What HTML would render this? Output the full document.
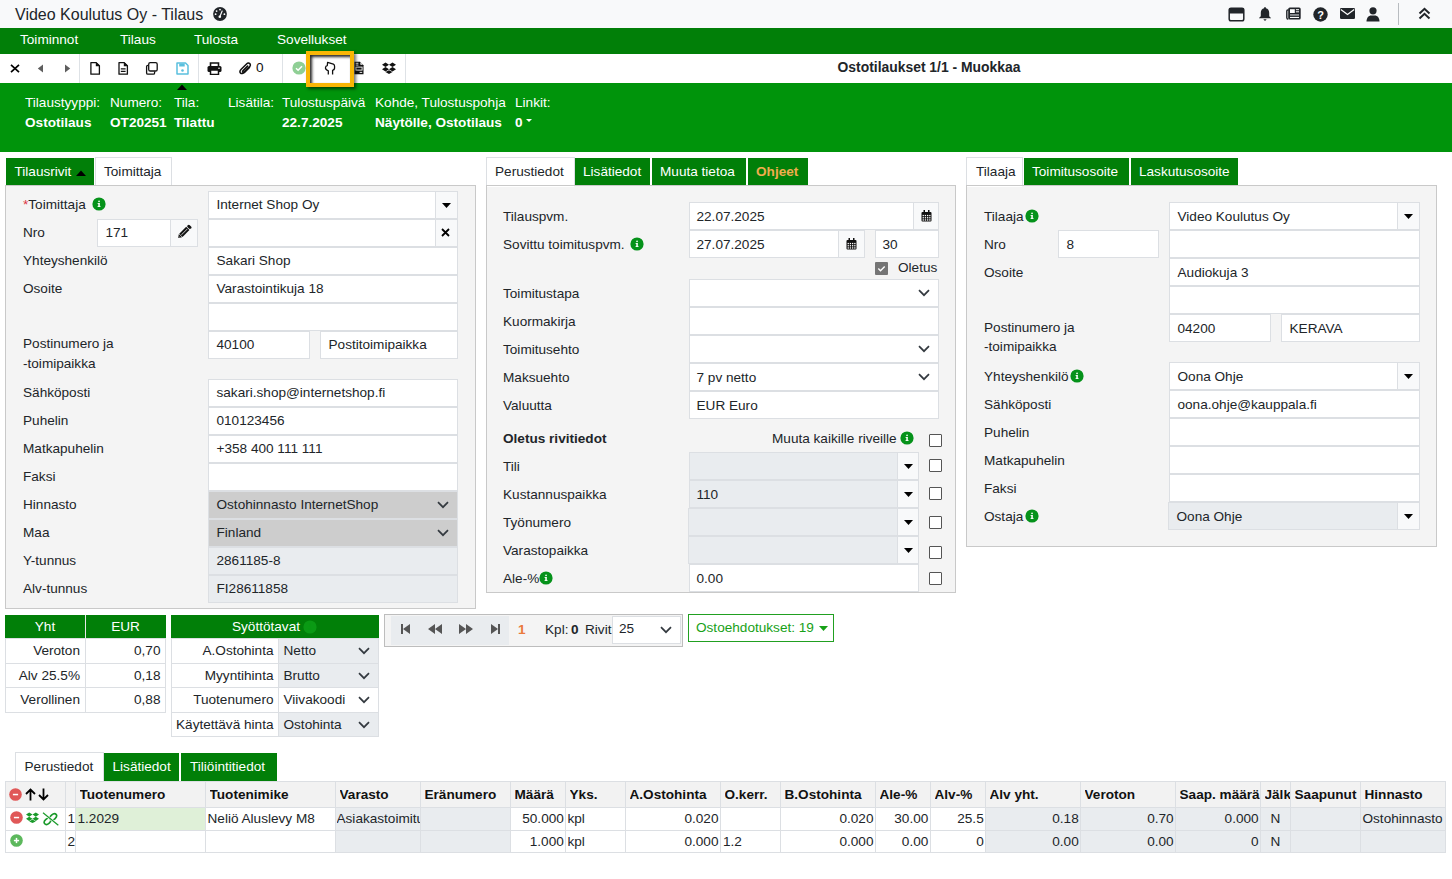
<!DOCTYPE html><html><head><meta charset="utf-8"><style>
html,body{margin:0;padding:0;width:1452px;height:879px;overflow:hidden;background:#fff;position:relative;font-family:"Liberation Sans",sans-serif;}
.t{position:absolute;white-space:nowrap;}
.b{position:absolute;box-sizing:border-box;}
</style></head><body>
<div class="b" style="left:0px;top:0px;width:1452px;height:28px;background:#f8f9fa"></div>
<div class="t" style="left:15px;top:4.86px;font-size:16px;line-height:19.2px;font-weight:400;color:#212529;">Video Koulutus Oy - Tilaus</div>
<div class="b" style="left:0px;top:28px;width:1452px;height:26px;background:#017f08"></div>
<div class="t" style="left:20px;top:32.13px;font-size:13.6px;line-height:16.32px;font-weight:400;color:#fff;">Toiminnot</div>
<div class="t" style="left:120px;top:32.13px;font-size:13.6px;line-height:16.32px;font-weight:400;color:#fff;">Tilaus</div>
<div class="t" style="left:194px;top:32.13px;font-size:13.6px;line-height:16.32px;font-weight:400;color:#fff;">Tulosta</div>
<div class="t" style="left:277px;top:32.13px;font-size:13.6px;line-height:16.32px;font-weight:400;color:#fff;">Sovellukset</div>
<div class="b" style="left:0px;top:54px;width:1452px;height:29px;background:#fff"></div>
<div class="b" style="left:79px;top:54px;width:1px;height:29px;background:#dee2e6"></div>
<div class="b" style="left:198px;top:54px;width:1px;height:29px;background:#dee2e6"></div>
<div class="b" style="left:282px;top:54px;width:1px;height:29px;background:#dee2e6"></div>
<div class="b" style="left:405px;top:54px;width:1px;height:29px;background:#dee2e6"></div>
<div class="t" style="left:629px;width:600px;text-align:center;top:58.54px;font-size:13.9px;line-height:16.68px;font-weight:700;color:#212529;">Ostotilaukset 1/1 - Muokkaa</div>
<div class="b" style="left:0px;top:83px;width:1452px;height:69px;background:#00940b"></div>
<div class="t" style="left:25px;top:95.13px;font-size:13.6px;line-height:16.32px;font-weight:400;color:#fff;">Tilaustyyppi:</div>
<div class="t" style="left:25px;top:115.13px;font-size:13.6px;line-height:16.32px;font-weight:700;color:#fff;">Ostotilaus</div>
<div class="t" style="left:110px;top:95.13px;font-size:13.6px;line-height:16.32px;font-weight:400;color:#fff;">Numero:</div>
<div class="t" style="left:110px;top:115.13px;font-size:13.6px;line-height:16.32px;font-weight:700;color:#fff;">OT20251</div>
<div class="t" style="left:174px;top:95.13px;font-size:13.6px;line-height:16.32px;font-weight:400;color:#fff;">Tila:</div>
<div class="t" style="left:174px;top:115.13px;font-size:13.6px;line-height:16.32px;font-weight:700;color:#fff;">Tilattu</div>
<div class="t" style="left:228px;top:95.13px;font-size:13.6px;line-height:16.32px;font-weight:400;color:#fff;">Lisätila:</div>
<div class="t" style="left:282px;top:95.13px;font-size:13.6px;line-height:16.32px;font-weight:400;color:#fff;">Tulostuspäivä</div>
<div class="t" style="left:282px;top:115.13px;font-size:13.6px;line-height:16.32px;font-weight:700;color:#fff;">22.7.2025</div>
<div class="t" style="left:375px;top:95.13px;font-size:13.6px;line-height:16.32px;font-weight:400;color:#fff;">Kohde, Tulostuspohja</div>
<div class="t" style="left:375px;top:115.13px;font-size:13.6px;line-height:16.32px;font-weight:700;color:#fff;">Näytölle, Ostotilaus</div>
<div class="t" style="left:515px;top:95.13px;font-size:13.6px;line-height:16.32px;font-weight:400;color:#fff;">Linkit:</div>
<div class="t" style="left:515px;top:115.13px;font-size:13.6px;line-height:16.32px;font-weight:700;color:#fff;">0</div>
<svg class="b" style="left:526px;top:119px" width="6" height="4" viewBox="0 0 6 4"><path d="M0 0H6L3 3Z" fill="#fff"/></svg>
<svg class="b" style="left:213px;top:6.5px" width="14" height="14" viewBox="0 0 14 14"><circle cx="7" cy="7" r="6.9" fill="#212529"/><circle cx="6.8" cy="9.8" r="1.3" fill="#fff"/><path d="M6.8 9.8L9.3 3.6" stroke="#fff" stroke-width="1.2"/><circle cx="3.6" cy="4.1" r="0.9" fill="#fff"/><circle cx="7" cy="2.6" r="0.9" fill="#fff"/><circle cx="2.6" cy="7.2" r="0.9" fill="#fff"/><circle cx="11.4" cy="7.2" r="0.9" fill="#fff"/></svg>
<svg class="b" style="left:1228px;top:6.5px" width="17" height="15" viewBox="0 0 17 15"><rect x="1.2" y="1.2" width="14.6" height="12.6" rx="1.8" fill="none" stroke="#212529" stroke-width="1.5"/><rect x="1" y="1" width="15" height="5.6" rx="1.2" fill="#212529"/></svg>
<svg class="b" style="left:1258px;top:7px" width="14" height="15" viewBox="0 0 14 15"><path d="M7 0C7.5 0 7.9 0.4 7.9 0.9V1.3C10 1.8 11.2 3.6 11.2 5.8V8.6C11.2 9.6 11.8 10.3 13 10.9V11.3H1V10.9C2.2 10.3 2.8 9.6 2.8 8.6V5.8C2.8 3.6 4 1.8 6.1 1.3V0.9C6.1 0.4 6.5 0 7 0Z" fill="#212529"/><path d="M5.3 12.2H8.7L7 14Z" fill="#212529"/></svg>
<svg class="b" style="left:1286px;top:7px" width="15" height="13" viewBox="0 0 15 13"><path d="M2.6 3H1.8C1.2 3 0.8 3.4 0.8 4V10.8C0.8 11.6 1.4 12.2 2.2 12.2" fill="none" stroke="#212529" stroke-width="1.4"/><rect x="2.2" y="0.5" width="12.5" height="12" rx="1.6" fill="#212529"/><rect x="4" y="2.2" width="4.8" height="3.8" fill="#fff"/><rect x="9.9" y="2.2" width="3.1" height="1" fill="#fff"/><rect x="9.9" y="4.3" width="3.1" height="1" fill="#fff"/><rect x="4" y="7" width="9" height="1.9" fill="#8a8d90"/><rect x="4" y="9.9" width="9" height="1.1" fill="#fff"/></svg>
<svg class="b" style="left:1313px;top:7px" width="15" height="15" viewBox="0 0 15 15"><circle cx="7.5" cy="7.5" r="7.2" fill="#212529"/><text x="7.5" y="11.6" text-anchor="middle" font-family="Liberation Sans" font-weight="700" font-size="11" fill="#fff">?</text></svg>
<svg class="b" style="left:1340px;top:8px" width="15" height="11" viewBox="0 0 15 11"><rect x="0" y="0" width="15" height="11" rx="1.2" fill="#212529"/><path d="M0.8 1.5L7.5 6.5L14.2 1.5" fill="none" stroke="#fff" stroke-width="1.2"/></svg>
<svg class="b" style="left:1366px;top:7px" width="14" height="15" viewBox="0 0 14 15"><circle cx="7" cy="3.8" r="3.6" fill="#212529"/><path d="M0.5 14.5C0.5 10.5 3 8.5 5 8.5H9C11 8.5 13.5 10.5 13.5 14.5Z" fill="#212529"/></svg>
<div class="b" style="left:1398px;top:3px;width:1px;height:22px;background:#b8bcc0"></div>
<svg class="b" style="left:1418px;top:7px" width="13" height="13" viewBox="0 0 13 13"><path d="M1.5 6.5L6.5 1.8L11.5 6.5M1.5 11.5L6.5 6.8L11.5 11.5" fill="none" stroke="#212529" stroke-width="2"/></svg>
<svg class="b" style="left:10px;top:63.5px" width="10" height="9" viewBox="0 0 10 9"><path d="M1 0.8L9 8.2M9 0.8L1 8.2" stroke="#000" stroke-width="1.7"/></svg>
<svg class="b" style="left:37px;top:63.5px" width="7" height="9" viewBox="0 0 7 9"><path d="M6 0.5V8.5L0.8 4.5Z" fill="#5e5e5e"/></svg>
<svg class="b" style="left:64px;top:63.5px" width="7" height="9" viewBox="0 0 7 9"><path d="M1 0.5V8.5L6.2 4.5Z" fill="#5e5e5e"/></svg>
<svg class="b" style="left:89px;top:61px" width="12" height="15" viewBox="0 0 12 15"><path d="M1.9 1.6H7.2L10.4 4.8V13.2H1.9Z" fill="none" stroke="#111" stroke-width="1.3" stroke-linejoin="round"/><path d="M6.8 1.5H7.6L10.5 4.4V5.2H6.8Z" fill="#111"/></svg>
<svg class="b" style="left:117px;top:61px" width="12" height="15" viewBox="0 0 12 15"><path d="M2 1.6H7.2L10.4 4.8V13.2H2Z" fill="none" stroke="#111" stroke-width="1.3" stroke-linejoin="round"/><path d="M6.8 1.5H7.6L10.5 4.4V5.2H6.8Z" fill="#111"/><path d="M3.8 7.9H8.6M3.8 10.4H8.6" stroke="#111" stroke-width="1.2"/></svg>
<svg class="b" style="left:145px;top:61px" width="14" height="15" viewBox="0 0 14 15"><path d="M5.3 1.6H10.6C11.6 1.6 12.2 2.2 12.2 3.2V8.4C12.2 9.4 11.6 10 10.6 10H5.3C4.3 10 3.7 9.4 3.7 8.4V3.2C3.7 2.2 4.3 1.6 5.3 1.6Z" fill="none" stroke="#111" stroke-width="1.3"/><path d="M3 4.3H2.9C2.1 4.3 1.6 4.8 1.6 5.6V11.9C1.6 12.7 2.1 13.2 2.9 13.2H8.3C9.1 13.2 9.6 12.7 9.6 11.9V10.6" fill="none" stroke="#111" stroke-width="1.3"/></svg>
<svg class="b" style="left:176px;top:62px" width="13" height="13" viewBox="0 0 13 13"><path d="M1 1H9.5L12 3.5V12H1Z" fill="none" stroke="#5bc0de" stroke-width="1.5" stroke-linejoin="round"/><rect x="3.2" y="1.5" width="5.5" height="3" fill="#5bc0de"/><circle cx="6.5" cy="8.5" r="1.3" fill="#5bc0de"/></svg>
<svg class="b" style="left:207px;top:62px" width="15" height="13" viewBox="0 0 15 13"><path d="M3.5 4V1H11.5V4" fill="none" stroke="#111" stroke-width="1.6"/><rect x="0.5" y="4" width="14" height="6" rx="1.5" fill="#111"/><rect x="3.5" y="8" width="8" height="4.5" fill="#fff" stroke="#111" stroke-width="1.5"/><circle cx="12" cy="6.2" r="0.8" fill="#fff"/></svg>
<svg class="b" style="left:239px;top:62px" width="13" height="13" viewBox="0 0 13 13"><path d="M10.5 5.5L5.5 10.5C4.2 11.8 2.3 11.8 1.6 11.1C0.9 10.4 0.9 8.6 2.2 7.3L7.8 1.7C8.7 0.8 10 0.8 10.8 1.6C11.6 2.4 11.6 3.7 10.7 4.6L5.4 9.9C4.9 10.4 4.2 10.4 3.9 10.1C3.6 9.8 3.6 9.1 4.1 8.6L8.6 4.1" fill="none" stroke="#111" stroke-width="1.5" stroke-linecap="round"/></svg>
<div class="t" style="left:256px;top:60.13px;font-size:13.6px;line-height:16.32px;font-weight:400;color:#111;">0</div>
<svg class="b" style="left:292px;top:61px" width="14" height="14" viewBox="0 0 14 14"><circle cx="7" cy="7" r="6.6" fill="#8fcf95"/><path d="M4 7.2L6.1 9.2L10 5.2" fill="none" stroke="#fff" stroke-width="1.5"/></svg>
<svg class="b" style="left:382px;top:62px" width="14" height="12" viewBox="0 0 14 12"><path d="M3.5 0.5L7 2.8L3.5 5L0 2.8Z M10.5 0.5L14 2.8L10.5 5L7 2.8Z M3.5 5L7 7.3L3.5 9.5L0 7.3Z M10.5 5L14 7.3L10.5 9.5L7 7.3Z M3.5 10L7 8.2L10.5 10L7 12Z" fill="#111"/></svg>
<svg class="b" style="left:354px;top:61px" width="10" height="14" viewBox="0 0 10 14"><path d="M0.5 0.7H6L9.5 4.2V13.3H0.5Z" fill="#111"/><path d="M6.4 1.3V3.8H8.9Z" fill="#fff"/><rect x="1.6" y="1.8" width="2.8" height="0.9" fill="#fff"/><rect x="1.6" y="3.6" width="2.8" height="0.9" fill="#fff"/><rect x="1.9" y="6.1" width="6.2" height="3" fill="#111" stroke="#fff" stroke-width="0.9"/><rect x="5.6" y="10.9" width="2.6" height="0.9" fill="#fff"/></svg>
<div class="b" style="left:306px;top:51px;width:48px;height:36px;border:4px solid #f9b605;box-shadow:inset 2px 2px 3px rgba(0,0,0,0.85), 2px 2px 3px rgba(0,0,0,0.55);background:#fff"></div>
<svg class="b" style="left:324px;top:61px" width="12" height="15" viewBox="0 0 12 15"><path d="M4.3 13.6V9.8C2.3 9 1.1 7.6 1.6 6.1C1.9 5.1 2.6 4.6 3.3 4.5L3.6 1.4L9.4 3.1C10.2 3.4 10.7 4.5 10.6 5.8L10.5 7.5C10.3 8.5 9.6 9 8.6 9.3V13.6" fill="none" stroke="#111" stroke-width="1.3" stroke-linejoin="round"/></svg>
<svg class="b" style="left:177px;top:84px" width="10" height="6" viewBox="0 0 10 6"><path d="M0 6L5 0.5L10 6Z" fill="#000"/></svg>
<div class="b" style="left:5px;top:185px;width:471px;height:424px;background:#f4f4f4;border:1px solid #c9c9c9"></div>
<div class="b" style="left:6px;top:158px;width:88px;height:27px;background:#017f08"></div>
<div class="t" style="left:14.5px;top:164.13px;font-size:13.6px;line-height:16.32px;font-weight:400;color:#fff;">Tilausrivit</div>
<svg class="b" style="left:76px;top:170px" width="10" height="6" viewBox="0 0 10 6"><path d="M0 6L5 0.5L10 6Z" fill="#000"/></svg>
<div class="b" style="left:95px;top:157px;width:77px;height:29px;background:#fff;border:1px solid #dcdfe3;border-bottom:none"></div>
<div class="t" style="left:104px;top:164.13px;font-size:13.6px;line-height:16.32px;font-weight:400;color:#212529;">Toimittaja</div>
<div class="b" style="left:5px;top:185px;width:471px;height:1px;background:#c9c9c9"></div>
<div class="t" style="left:23px;top:196.63px;font-size:13.6px;line-height:16.32px;font-weight:400;color:#212529;"><span style="color:#dc3545">*</span>Toimittaja</div>
<svg class="b" style="left:91.5px;top:197px" width="14" height="14" viewBox="0 0 14 14"><circle cx="7" cy="7" r="6.6" fill="#05921a"/><rect x="6.3" y="6.1" width="1.5" height="3.6" fill="#fff"/><rect x="5.6" y="8.9" width="2.9" height="1" fill="#fff"/><rect x="5.6" y="6.1" width="2" height="0.9" fill="#fff"/><circle cx="7.05" cy="4.3" r="0.85" fill="#fff"/></svg>
<div class="b" style="left:208px;top:191px;width:250px;height:28px;background:#fff;border:1px solid #dcdfe3"></div>
<div class="t" style="left:216.5px;top:196.63px;font-size:13.6px;line-height:16.32px;font-weight:400;color:#212529;">Internet Shop Oy</div>
<div class="b" style="left:435px;top:191px;width:23px;height:28px;background:#f8f9fa;border:1px solid #dcdfe3"></div>
<svg class="b" style="left:442.0px;top:202.5px" width="9" height="5" viewBox="0 0 9 5"><path d="M0 0H9L4.5 5Z" fill="#000"/></svg>
<div class="t" style="left:23px;top:224.63px;font-size:13.6px;line-height:16.32px;font-weight:400;color:#212529;">Nro</div>
<div class="b" style="left:97px;top:219px;width:74px;height:28px;background:#fff;border:1px solid #dcdfe3"></div>
<div class="t" style="left:105.5px;top:224.63px;font-size:13.6px;line-height:16.32px;font-weight:400;color:#212529;">171</div>
<div class="b" style="left:170px;top:219px;width:28px;height:28px;background:#f8f9fa;border:1px solid #dcdfe3"></div>
<svg class="b" style="left:177px;top:224px" width="15" height="15" viewBox="0 0 15 15"><g transform="translate(1.2,14) rotate(-45)"><path d="M0 0L3.2 -2.3V2.3Z" fill="#111"/><rect x="3.8" y="-2.3" width="9.8" height="4.6" fill="#111"/><rect x="4.6" y="-0.35" width="8.2" height="0.7" fill="#fff" opacity="0.8"/><rect x="14.3" y="-2.3" width="3" height="4.6" rx="1.4" fill="#111"/><path d="M0.9 0L1.9 -0.7V0.7Z" fill="#fff" opacity="0.6"/></g></svg>
<div class="b" style="left:208px;top:219px;width:250px;height:28px;background:#fff;border:1px solid #dcdfe3"></div>
<div class="b" style="left:435px;top:219px;width:23px;height:28px;background:#f8f9fa;border:1px solid #dcdfe3"></div>
<svg class="b" style="left:441px;top:228px" width="9" height="9" viewBox="0 0 9 9"><path d="M1 1L8 8M8 1L1 8" stroke="#000" stroke-width="1.8"/></svg>
<div class="t" style="left:23px;top:252.63px;font-size:13.6px;line-height:16.32px;font-weight:400;color:#212529;">Yhteyshenkilö</div>
<div class="b" style="left:208px;top:247px;width:250px;height:28px;background:#fff;border:1px solid #dcdfe3"></div>
<div class="t" style="left:216.5px;top:252.63px;font-size:13.6px;line-height:16.32px;font-weight:400;color:#212529;">Sakari Shop</div>
<div class="t" style="left:23px;top:280.63px;font-size:13.6px;line-height:16.32px;font-weight:400;color:#212529;">Osoite</div>
<div class="b" style="left:208px;top:275px;width:250px;height:28px;background:#fff;border:1px solid #dcdfe3"></div>
<div class="t" style="left:216.5px;top:280.63px;font-size:13.6px;line-height:16.32px;font-weight:400;color:#212529;">Varastointikuja 18</div>
<div class="b" style="left:208px;top:303px;width:250px;height:28px;background:#fff;border:1px solid #dcdfe3"></div>
<div class="t" style="left:23px;top:336.43px;font-size:13.6px;line-height:16.32px;font-weight:400;color:#212529;">Postinumero ja</div>
<div class="t" style="left:23px;top:356.43px;font-size:13.6px;line-height:16.32px;font-weight:400;color:#212529;">-toimipaikka</div>
<div class="b" style="left:208px;top:331px;width:102px;height:28px;background:#fff;border:1px solid #dcdfe3"></div>
<div class="t" style="left:216.5px;top:336.63px;font-size:13.6px;line-height:16.32px;font-weight:400;color:#212529;">40100</div>
<div class="b" style="left:320px;top:331px;width:138px;height:28px;background:#fff;border:1px solid #dcdfe3"></div>
<div class="t" style="left:328.5px;top:336.63px;font-size:13.6px;line-height:16.32px;font-weight:400;color:#212529;">Postitoimipaikka</div>
<div class="t" style="left:23px;top:384.63px;font-size:13.6px;line-height:16.32px;font-weight:400;color:#212529;">Sähköposti</div>
<div class="b" style="left:208px;top:379px;width:250px;height:28px;background:#fff;border:1px solid #dcdfe3"></div>
<div class="t" style="left:216.5px;top:384.63px;font-size:13.6px;line-height:16.32px;font-weight:400;color:#212529;">sakari.shop@internetshop.fi</div>
<div class="t" style="left:23px;top:412.63px;font-size:13.6px;line-height:16.32px;font-weight:400;color:#212529;">Puhelin</div>
<div class="b" style="left:208px;top:407px;width:250px;height:28px;background:#fff;border:1px solid #dcdfe3"></div>
<div class="t" style="left:216.5px;top:412.63px;font-size:13.6px;line-height:16.32px;font-weight:400;color:#212529;">010123456</div>
<div class="t" style="left:23px;top:440.63px;font-size:13.6px;line-height:16.32px;font-weight:400;color:#212529;">Matkapuhelin</div>
<div class="b" style="left:208px;top:435px;width:250px;height:28px;background:#fff;border:1px solid #dcdfe3"></div>
<div class="t" style="left:216.5px;top:440.63px;font-size:13.6px;line-height:16.32px;font-weight:400;color:#212529;">+358 400 111 111</div>
<div class="t" style="left:23px;top:468.63px;font-size:13.6px;line-height:16.32px;font-weight:400;color:#212529;">Faksi</div>
<div class="b" style="left:208px;top:463px;width:250px;height:28px;background:#fff;border:1px solid #dcdfe3"></div>
<div class="t" style="left:23px;top:496.63px;font-size:13.6px;line-height:16.32px;font-weight:400;color:#212529;">Hinnasto</div>
<div class="b" style="left:208px;top:491px;width:250px;height:28px;background:#cdcdcd;border:1px solid #dcdfe3"></div>
<div class="t" style="left:216.5px;top:496.63px;font-size:13.6px;line-height:16.32px;font-weight:400;color:#212529;">Ostohinnasto InternetShop</div>
<svg class="b" style="left:437px;top:501px" width="12" height="8" viewBox="0 0 12 8"><path d="M1 1.2L6 6.2L11 1.2" fill="none" stroke="#343a40" stroke-width="1.7"/></svg>
<div class="t" style="left:23px;top:524.63px;font-size:13.6px;line-height:16.32px;font-weight:400;color:#212529;">Maa</div>
<div class="b" style="left:208px;top:519px;width:250px;height:28px;background:#cdcdcd;border:1px solid #dcdfe3"></div>
<div class="t" style="left:216.5px;top:524.63px;font-size:13.6px;line-height:16.32px;font-weight:400;color:#212529;">Finland</div>
<svg class="b" style="left:437px;top:529px" width="12" height="8" viewBox="0 0 12 8"><path d="M1 1.2L6 6.2L11 1.2" fill="none" stroke="#343a40" stroke-width="1.7"/></svg>
<div class="t" style="left:23px;top:552.63px;font-size:13.6px;line-height:16.32px;font-weight:400;color:#212529;">Y-tunnus</div>
<div class="b" style="left:208px;top:547px;width:250px;height:28px;background:#e9ecef;border:1px solid #dcdfe3"></div>
<div class="t" style="left:216.5px;top:552.63px;font-size:13.6px;line-height:16.32px;font-weight:400;color:#212529;">2861185-8</div>
<div class="t" style="left:23px;top:580.63px;font-size:13.6px;line-height:16.32px;font-weight:400;color:#212529;">Alv-tunnus</div>
<div class="b" style="left:208px;top:575px;width:250px;height:28px;background:#e9ecef;border:1px solid #dcdfe3"></div>
<div class="t" style="left:216.5px;top:580.63px;font-size:13.6px;line-height:16.32px;font-weight:400;color:#212529;">FI28611858</div>
<div class="b" style="left:486px;top:185px;width:470px;height:408px;background:#f4f4f4;border:1px solid #c9c9c9"></div>
<div class="b" style="left:486px;top:157px;width:89px;height:29px;background:#fff;border:1px solid #dcdfe3;border-bottom:none"></div>
<div class="t" style="left:495px;top:164.13px;font-size:13.6px;line-height:16.32px;font-weight:400;color:#212529;">Perustiedot</div>
<div class="b" style="left:486px;top:185px;width:470px;height:1px;background:#c9c9c9"></div>
<div class="b" style="left:487px;top:186px;width:87px;height:1px;background:#fff"></div>
<div class="b" style="left:575px;top:158px;width:75px;height:27px;background:#017f08"></div>
<div class="t" style="left:583px;top:164.13px;font-size:13.6px;line-height:16.32px;font-weight:400;color:#fff;">Lisätiedot</div>
<div class="b" style="left:652px;top:158px;width:94px;height:27px;background:#017f08"></div>
<div class="t" style="left:660px;top:164.13px;font-size:13.6px;line-height:16.32px;font-weight:400;color:#fff;">Muuta tietoa</div>
<div class="b" style="left:748px;top:158px;width:60px;height:27px;background:#017f08"></div>
<div class="t" style="left:756px;top:164.13px;font-size:13.6px;line-height:16.32px;font-weight:700;color:#f0ad4e;">Ohjeet</div>
<div class="t" style="left:503px;top:208.63px;font-size:13.6px;line-height:16.32px;font-weight:400;color:#212529;">Tilauspvm.</div>
<div class="b" style="left:689px;top:202px;width:250px;height:28px;background:#fff;border:1px solid #dcdfe3"></div>
<div class="t" style="left:696.5px;top:208.63px;font-size:13.6px;line-height:16.32px;font-weight:400;color:#212529;">22.07.2025</div>
<div class="b" style="left:913px;top:202px;width:26px;height:28px;background:#f8f9fa;border:1px solid #dcdfe3"></div>
<svg class="b" style="left:920.5px;top:210px" width="11" height="12" viewBox="0 0 11 12"><rect x="0.5" y="2" width="10" height="9.5" rx="1" fill="#111"/><rect x="2.5" y="0" width="1.5" height="3" fill="#111"/><rect x="7" y="0" width="1.5" height="3" fill="#111"/><rect x="1.6" y="4.9" width="1.3" height="1.3" fill="#fff"/><rect x="1.6" y="7.1000000000000005" width="1.3" height="1.3" fill="#fff"/><rect x="1.6" y="9.3" width="1.3" height="1.3" fill="#fff"/><rect x="3.8000000000000003" y="4.9" width="1.3" height="1.3" fill="#fff"/><rect x="3.8000000000000003" y="7.1000000000000005" width="1.3" height="1.3" fill="#fff"/><rect x="3.8000000000000003" y="9.3" width="1.3" height="1.3" fill="#fff"/><rect x="6.0" y="4.9" width="1.3" height="1.3" fill="#fff"/><rect x="6.0" y="7.1000000000000005" width="1.3" height="1.3" fill="#fff"/><rect x="6.0" y="9.3" width="1.3" height="1.3" fill="#fff"/><rect x="8.200000000000001" y="4.9" width="1.3" height="1.3" fill="#fff"/><rect x="8.200000000000001" y="7.1000000000000005" width="1.3" height="1.3" fill="#fff"/><rect x="8.200000000000001" y="9.3" width="1.3" height="1.3" fill="#fff"/></svg>
<div class="t" style="left:503px;top:236.63px;font-size:13.6px;line-height:16.32px;font-weight:400;color:#212529;">Sovittu toimituspvm.</div>
<svg class="b" style="left:630px;top:237px" width="14" height="14" viewBox="0 0 14 14"><circle cx="7" cy="7" r="6.6" fill="#05921a"/><rect x="6.3" y="6.1" width="1.5" height="3.6" fill="#fff"/><rect x="5.6" y="8.9" width="2.9" height="1" fill="#fff"/><rect x="5.6" y="6.1" width="2" height="0.9" fill="#fff"/><circle cx="7.05" cy="4.3" r="0.85" fill="#fff"/></svg>
<div class="b" style="left:689px;top:230px;width:176px;height:28px;background:#fff;border:1px solid #dcdfe3"></div>
<div class="t" style="left:696.5px;top:236.63px;font-size:13.6px;line-height:16.32px;font-weight:400;color:#212529;">27.07.2025</div>
<div class="b" style="left:838px;top:230px;width:27px;height:28px;background:#f8f9fa;border:1px solid #dcdfe3"></div>
<svg class="b" style="left:846px;top:238px" width="11" height="12" viewBox="0 0 11 12"><rect x="0.5" y="2" width="10" height="9.5" rx="1" fill="#111"/><rect x="2.5" y="0" width="1.5" height="3" fill="#111"/><rect x="7" y="0" width="1.5" height="3" fill="#111"/><rect x="1.6" y="4.9" width="1.3" height="1.3" fill="#fff"/><rect x="1.6" y="7.1000000000000005" width="1.3" height="1.3" fill="#fff"/><rect x="1.6" y="9.3" width="1.3" height="1.3" fill="#fff"/><rect x="3.8000000000000003" y="4.9" width="1.3" height="1.3" fill="#fff"/><rect x="3.8000000000000003" y="7.1000000000000005" width="1.3" height="1.3" fill="#fff"/><rect x="3.8000000000000003" y="9.3" width="1.3" height="1.3" fill="#fff"/><rect x="6.0" y="4.9" width="1.3" height="1.3" fill="#fff"/><rect x="6.0" y="7.1000000000000005" width="1.3" height="1.3" fill="#fff"/><rect x="6.0" y="9.3" width="1.3" height="1.3" fill="#fff"/><rect x="8.200000000000001" y="4.9" width="1.3" height="1.3" fill="#fff"/><rect x="8.200000000000001" y="7.1000000000000005" width="1.3" height="1.3" fill="#fff"/><rect x="8.200000000000001" y="9.3" width="1.3" height="1.3" fill="#fff"/></svg>
<div class="b" style="left:875px;top:230px;width:64px;height:28px;background:#fff;border:1px solid #dcdfe3"></div>
<div class="t" style="left:882.5px;top:236.63px;font-size:13.6px;line-height:16.32px;font-weight:400;color:#212529;">30</div>
<svg class="b" style="left:875px;top:262px" width="13" height="13" viewBox="0 0 13 13"><rect x="0" y="0" width="13" height="13" rx="1" fill="#757575"/><path d="M3.3 6.6L5.5 8.7L9.7 4.5" fill="none" stroke="#fff" stroke-width="1.4"/></svg>
<div class="t" style="left:898px;top:260.13px;font-size:13.6px;line-height:16.32px;font-weight:400;color:#212529;">Oletus</div>
<div class="t" style="left:503px;top:285.63px;font-size:13.6px;line-height:16.32px;font-weight:400;color:#212529;">Toimitustapa</div>
<div class="b" style="left:689px;top:279px;width:250px;height:28px;background:#fff;border:1px solid #dcdfe3"></div>
<svg class="b" style="left:918px;top:289px" width="12" height="8" viewBox="0 0 12 8"><path d="M1 1.2L6 6.2L11 1.2" fill="none" stroke="#343a40" stroke-width="1.7"/></svg>
<div class="t" style="left:503px;top:313.63px;font-size:13.6px;line-height:16.32px;font-weight:400;color:#212529;">Kuormakirja</div>
<div class="b" style="left:689px;top:307px;width:250px;height:28px;background:#fff;border:1px solid #dcdfe3"></div>
<div class="t" style="left:503px;top:341.63px;font-size:13.6px;line-height:16.32px;font-weight:400;color:#212529;">Toimitusehto</div>
<div class="b" style="left:689px;top:335px;width:250px;height:28px;background:#fff;border:1px solid #dcdfe3"></div>
<svg class="b" style="left:918px;top:345px" width="12" height="8" viewBox="0 0 12 8"><path d="M1 1.2L6 6.2L11 1.2" fill="none" stroke="#343a40" stroke-width="1.7"/></svg>
<div class="t" style="left:503px;top:369.63px;font-size:13.6px;line-height:16.32px;font-weight:400;color:#212529;">Maksuehto</div>
<div class="b" style="left:689px;top:363px;width:250px;height:28px;background:#fff;border:1px solid #dcdfe3"></div>
<div class="t" style="left:696.5px;top:369.63px;font-size:13.6px;line-height:16.32px;font-weight:400;color:#212529;">7 pv netto</div>
<svg class="b" style="left:918px;top:373px" width="12" height="8" viewBox="0 0 12 8"><path d="M1 1.2L6 6.2L11 1.2" fill="none" stroke="#343a40" stroke-width="1.7"/></svg>
<div class="t" style="left:503px;top:397.63px;font-size:13.6px;line-height:16.32px;font-weight:400;color:#212529;">Valuutta</div>
<div class="b" style="left:689px;top:391px;width:250px;height:28px;background:#fff;border:1px solid #dcdfe3"></div>
<div class="t" style="left:696.5px;top:397.63px;font-size:13.6px;line-height:16.32px;font-weight:400;color:#212529;">EUR Euro</div>
<div class="t" style="left:503px;top:431.13px;font-size:13.6px;line-height:16.32px;font-weight:700;color:#212529;">Oletus rivitiedot</div>
<div class="t" style="left:772px;top:431.13px;font-size:13.6px;line-height:16.32px;font-weight:400;color:#212529;">Muuta kaikille riveille</div>
<svg class="b" style="left:899.5px;top:431px" width="14" height="14" viewBox="0 0 14 14"><circle cx="7" cy="7" r="6.6" fill="#05921a"/><rect x="6.3" y="6.1" width="1.5" height="3.6" fill="#fff"/><rect x="5.6" y="8.9" width="2.9" height="1" fill="#fff"/><rect x="5.6" y="6.1" width="2" height="0.9" fill="#fff"/><circle cx="7.05" cy="4.3" r="0.85" fill="#fff"/></svg>
<div class="b" style="left:929px;top:434px;width:13px;height:13px;background:#fff;border:1px solid #555;border-radius:1px"></div>
<div class="t" style="left:503px;top:458.63px;font-size:13.6px;line-height:16.32px;font-weight:400;color:#212529;">Tili</div>
<div class="b" style="left:689px;top:452px;width:230px;height:28px;background:#e9ecef;border:1px solid #dcdfe3"></div>
<div class="b" style="left:897px;top:452px;width:22px;height:28px;background:#f8f9fa;border:1px solid #dcdfe3"></div>
<svg class="b" style="left:903.5px;top:463.5px" width="9" height="5" viewBox="0 0 9 5"><path d="M0 0H9L4.5 5Z" fill="#000"/></svg>
<div class="b" style="left:929px;top:459px;width:13px;height:13px;background:#fff;border:1px solid #555;border-radius:1px"></div>
<div class="t" style="left:503px;top:486.63px;font-size:13.6px;line-height:16.32px;font-weight:400;color:#212529;">Kustannuspaikka</div>
<div class="b" style="left:689px;top:480px;width:230px;height:28px;background:#e9ecef;border:1px solid #dcdfe3"></div>
<div class="t" style="left:696.5px;top:486.63px;font-size:13.6px;line-height:16.32px;font-weight:400;color:#212529;">110</div>
<div class="b" style="left:897px;top:480px;width:22px;height:28px;background:#f8f9fa;border:1px solid #dcdfe3"></div>
<svg class="b" style="left:903.5px;top:491.5px" width="9" height="5" viewBox="0 0 9 5"><path d="M0 0H9L4.5 5Z" fill="#000"/></svg>
<div class="b" style="left:929px;top:487px;width:13px;height:13px;background:#fff;border:1px solid #555;border-radius:1px"></div>
<div class="t" style="left:503px;top:514.63px;font-size:13.6px;line-height:16.32px;font-weight:400;color:#212529;">Työnumero</div>
<div class="b" style="left:688px;top:508px;width:231px;height:28px;background:#e9ecef;border:1px solid #dcdfe3"></div>
<div class="b" style="left:897px;top:508px;width:22px;height:28px;background:#f8f9fa;border:1px solid #dcdfe3"></div>
<svg class="b" style="left:903.5px;top:519.5px" width="9" height="5" viewBox="0 0 9 5"><path d="M0 0H9L4.5 5Z" fill="#000"/></svg>
<div class="b" style="left:929px;top:516px;width:13px;height:13px;background:#fff;border:1px solid #555;border-radius:1px"></div>
<div class="t" style="left:503px;top:542.63px;font-size:13.6px;line-height:16.32px;font-weight:400;color:#212529;">Varastopaikka</div>
<div class="b" style="left:688px;top:536px;width:231px;height:28px;background:#e9ecef;border:1px solid #dcdfe3"></div>
<div class="b" style="left:897px;top:536px;width:22px;height:28px;background:#f8f9fa;border:1px solid #dcdfe3"></div>
<svg class="b" style="left:903.5px;top:547.5px" width="9" height="5" viewBox="0 0 9 5"><path d="M0 0H9L4.5 5Z" fill="#000"/></svg>
<div class="b" style="left:929px;top:546px;width:13px;height:13px;background:#fff;border:1px solid #555;border-radius:1px"></div>
<div class="t" style="left:503px;top:570.63px;font-size:13.6px;line-height:16.32px;font-weight:400;color:#212529;">Ale-%</div>
<svg class="b" style="left:539px;top:571px" width="14" height="14" viewBox="0 0 14 14"><circle cx="7" cy="7" r="6.6" fill="#05921a"/><rect x="6.3" y="6.1" width="1.5" height="3.6" fill="#fff"/><rect x="5.6" y="8.9" width="2.9" height="1" fill="#fff"/><rect x="5.6" y="6.1" width="2" height="0.9" fill="#fff"/><circle cx="7.05" cy="4.3" r="0.85" fill="#fff"/></svg>
<div class="b" style="left:689px;top:564px;width:230px;height:28px;background:#fff;border:1px solid #dcdfe3"></div>
<div class="t" style="left:696.5px;top:570.63px;font-size:13.6px;line-height:16.32px;font-weight:400;color:#212529;">0.00</div>
<div class="b" style="left:929px;top:572px;width:13px;height:13px;background:#fff;border:1px solid #555;border-radius:1px"></div>
<div class="b" style="left:966px;top:185px;width:471px;height:362px;background:#f4f4f4;border:1px solid #c9c9c9"></div>
<div class="b" style="left:966px;top:157px;width:57px;height:29px;background:#fff;border:1px solid #dcdfe3;border-bottom:none"></div>
<div class="t" style="left:976px;top:164.13px;font-size:13.6px;line-height:16.32px;font-weight:400;color:#212529;">Tilaaja</div>
<div class="b" style="left:966px;top:185px;width:471px;height:1px;background:#c9c9c9"></div>
<div class="b" style="left:967px;top:186px;width:55px;height:1px;background:#fff"></div>
<div class="b" style="left:1024px;top:158px;width:105px;height:27px;background:#017f08"></div>
<div class="t" style="left:1032px;top:164.13px;font-size:13.6px;line-height:16.32px;font-weight:400;color:#fff;">Toimitusosoite</div>
<div class="b" style="left:1131px;top:158px;width:107px;height:27px;background:#017f08"></div>
<div class="t" style="left:1139px;top:164.13px;font-size:13.6px;line-height:16.32px;font-weight:400;color:#fff;">Laskutusosoite</div>
<div class="t" style="left:984px;top:208.63px;font-size:13.6px;line-height:16.32px;font-weight:400;color:#212529;">Tilaaja</div>
<svg class="b" style="left:1025px;top:209px" width="14" height="14" viewBox="0 0 14 14"><circle cx="7" cy="7" r="6.6" fill="#05921a"/><rect x="6.3" y="6.1" width="1.5" height="3.6" fill="#fff"/><rect x="5.6" y="8.9" width="2.9" height="1" fill="#fff"/><rect x="5.6" y="6.1" width="2" height="0.9" fill="#fff"/><circle cx="7.05" cy="4.3" r="0.85" fill="#fff"/></svg>
<div class="b" style="left:1169px;top:202px;width:251px;height:28px;background:#fff;border:1px solid #dcdfe3"></div>
<div class="t" style="left:1177.5px;top:208.63px;font-size:13.6px;line-height:16.32px;font-weight:400;color:#212529;">Video Koulutus Oy</div>
<div class="b" style="left:1397px;top:202px;width:23px;height:28px;background:#f8f9fa;border:1px solid #dcdfe3"></div>
<svg class="b" style="left:1404.0px;top:213.5px" width="9" height="5" viewBox="0 0 9 5"><path d="M0 0H9L4.5 5Z" fill="#000"/></svg>
<div class="t" style="left:984px;top:236.63px;font-size:13.6px;line-height:16.32px;font-weight:400;color:#212529;">Nro</div>
<div class="b" style="left:1058px;top:230px;width:101px;height:28px;background:#fff;border:1px solid #dcdfe3"></div>
<div class="t" style="left:1066.5px;top:236.63px;font-size:13.6px;line-height:16.32px;font-weight:400;color:#212529;">8</div>
<div class="b" style="left:1169px;top:230px;width:251px;height:28px;background:#fff;border:1px solid #dcdfe3"></div>
<div class="t" style="left:984px;top:264.63px;font-size:13.6px;line-height:16.32px;font-weight:400;color:#212529;">Osoite</div>
<div class="b" style="left:1169px;top:258px;width:251px;height:28px;background:#fff;border:1px solid #dcdfe3"></div>
<div class="t" style="left:1177.5px;top:264.63px;font-size:13.6px;line-height:16.32px;font-weight:400;color:#212529;">Audiokuja 3</div>
<div class="b" style="left:1169px;top:286px;width:251px;height:28px;background:#fff;border:1px solid #dcdfe3"></div>
<div class="t" style="left:984px;top:319.63px;font-size:13.6px;line-height:16.32px;font-weight:400;color:#212529;">Postinumero ja</div>
<div class="t" style="left:984px;top:338.63px;font-size:13.6px;line-height:16.32px;font-weight:400;color:#212529;">-toimipaikka</div>
<div class="b" style="left:1169px;top:314px;width:102px;height:28px;background:#fff;border:1px solid #dcdfe3"></div>
<div class="t" style="left:1177.5px;top:320.63px;font-size:13.6px;line-height:16.32px;font-weight:400;color:#212529;">04200</div>
<div class="b" style="left:1281px;top:314px;width:139px;height:28px;background:#fff;border:1px solid #dcdfe3"></div>
<div class="t" style="left:1289.5px;top:320.63px;font-size:13.6px;line-height:16.32px;font-weight:400;color:#212529;">KERAVA</div>
<div class="t" style="left:984px;top:368.63px;font-size:13.6px;line-height:16.32px;font-weight:400;color:#212529;">Yhteyshenkilö</div>
<svg class="b" style="left:1070px;top:369px" width="14" height="14" viewBox="0 0 14 14"><circle cx="7" cy="7" r="6.6" fill="#05921a"/><rect x="6.3" y="6.1" width="1.5" height="3.6" fill="#fff"/><rect x="5.6" y="8.9" width="2.9" height="1" fill="#fff"/><rect x="5.6" y="6.1" width="2" height="0.9" fill="#fff"/><circle cx="7.05" cy="4.3" r="0.85" fill="#fff"/></svg>
<div class="b" style="left:1169px;top:362px;width:251px;height:28px;background:#fff;border:1px solid #dcdfe3"></div>
<div class="t" style="left:1177.5px;top:368.63px;font-size:13.6px;line-height:16.32px;font-weight:400;color:#212529;">Oona Ohje</div>
<div class="b" style="left:1397px;top:362px;width:23px;height:28px;background:#f8f9fa;border:1px solid #dcdfe3"></div>
<svg class="b" style="left:1404.0px;top:373.5px" width="9" height="5" viewBox="0 0 9 5"><path d="M0 0H9L4.5 5Z" fill="#000"/></svg>
<div class="t" style="left:984px;top:396.63px;font-size:13.6px;line-height:16.32px;font-weight:400;color:#212529;">Sähköposti</div>
<div class="b" style="left:1169px;top:390px;width:251px;height:28px;background:#fff;border:1px solid #dcdfe3"></div>
<div class="t" style="left:1177.5px;top:396.63px;font-size:13.6px;line-height:16.32px;font-weight:400;color:#212529;">oona.ohje@kauppala.fi</div>
<div class="t" style="left:984px;top:424.63px;font-size:13.6px;line-height:16.32px;font-weight:400;color:#212529;">Puhelin</div>
<div class="b" style="left:1169px;top:418px;width:251px;height:28px;background:#fff;border:1px solid #dcdfe3"></div>
<div class="t" style="left:984px;top:452.63px;font-size:13.6px;line-height:16.32px;font-weight:400;color:#212529;">Matkapuhelin</div>
<div class="b" style="left:1169px;top:446px;width:251px;height:28px;background:#fff;border:1px solid #dcdfe3"></div>
<div class="t" style="left:984px;top:480.63px;font-size:13.6px;line-height:16.32px;font-weight:400;color:#212529;">Faksi</div>
<div class="b" style="left:1169px;top:474px;width:251px;height:28px;background:#fff;border:1px solid #dcdfe3"></div>
<div class="t" style="left:984px;top:508.63px;font-size:13.6px;line-height:16.32px;font-weight:400;color:#212529;">Ostaja</div>
<svg class="b" style="left:1025px;top:509px" width="14" height="14" viewBox="0 0 14 14"><circle cx="7" cy="7" r="6.6" fill="#05921a"/><rect x="6.3" y="6.1" width="1.5" height="3.6" fill="#fff"/><rect x="5.6" y="8.9" width="2.9" height="1" fill="#fff"/><rect x="5.6" y="6.1" width="2" height="0.9" fill="#fff"/><circle cx="7.05" cy="4.3" r="0.85" fill="#fff"/></svg>
<div class="b" style="left:1168px;top:502px;width:252px;height:28px;background:#e9ecef;border:1px solid #dcdfe3"></div>
<div class="t" style="left:1176.5px;top:508.63px;font-size:13.6px;line-height:16.32px;font-weight:400;color:#212529;">Oona Ohje</div>
<div class="b" style="left:1397px;top:502px;width:23px;height:28px;background:#f8f9fa;border:1px solid #dcdfe3"></div>
<svg class="b" style="left:1404.0px;top:513.5px" width="9" height="5" viewBox="0 0 9 5"><path d="M0 0H9L4.5 5Z" fill="#000"/></svg>
<div class="b" style="left:5px;top:615px;width:161px;height:23px;background:#017f08"></div>
<div class="b" style="left:85px;top:615px;width:1px;height:23px;background:#e8e8e8"></div>
<div class="t" style="left:-255px;width:600px;text-align:center;top:619.13px;font-size:13.6px;line-height:16.32px;font-weight:400;color:#fff;">Yht</div>
<div class="t" style="left:-174.5px;width:600px;text-align:center;top:619.13px;font-size:13.6px;line-height:16.32px;font-weight:400;color:#fff;">EUR</div>
<div class="b" style="left:5px;top:638px;width:81px;height:26px;background:#fff;border:1px solid #dcdfe3"></div>
<div class="b" style="left:85px;top:638px;width:81px;height:26px;background:#fff;border:1px solid #dcdfe3"></div>
<div class="t" style="right:1372px;top:642.83px;font-size:13.6px;line-height:16.32px;font-weight:400;color:#212529;">Veroton</div>
<div class="t" style="right:1291.5px;top:642.83px;font-size:13.6px;line-height:16.32px;font-weight:400;color:#212529;">0,70</div>
<div class="b" style="left:5px;top:663px;width:81px;height:25px;background:#fff;border:1px solid #dcdfe3"></div>
<div class="b" style="left:85px;top:663px;width:81px;height:25px;background:#fff;border:1px solid #dcdfe3"></div>
<div class="t" style="right:1372px;top:667.73px;font-size:13.6px;line-height:16.32px;font-weight:400;color:#212529;">Alv 25.5%</div>
<div class="t" style="right:1291.5px;top:667.73px;font-size:13.6px;line-height:16.32px;font-weight:400;color:#212529;">0,18</div>
<div class="b" style="left:5px;top:687px;width:81px;height:26px;background:#fff;border:1px solid #dcdfe3"></div>
<div class="b" style="left:85px;top:687px;width:81px;height:26px;background:#fff;border:1px solid #dcdfe3"></div>
<div class="t" style="right:1372px;top:691.53px;font-size:13.6px;line-height:16.32px;font-weight:400;color:#212529;">Verollinen</div>
<div class="t" style="right:1291.5px;top:691.53px;font-size:13.6px;line-height:16.32px;font-weight:400;color:#212529;">0,88</div>
<div class="b" style="left:171px;top:615px;width:208px;height:23px;background:#017f08"></div>
<div class="t" style="left:232px;top:619.13px;font-size:13.6px;line-height:16.32px;font-weight:400;color:#fff;">Syöttötavat</div>
<svg class="b" style="left:303px;top:620px" width="14" height="14" viewBox="0 0 14 14"><circle cx="7" cy="7" r="6.6" fill="#0a9a14"/><rect x="6.3" y="6.1" width="1.5" height="3.6" fill="#0a9a14"/><rect x="5.6" y="8.9" width="2.9" height="1" fill="#0a9a14"/><rect x="5.6" y="6.1" width="2" height="0.9" fill="#0a9a14"/><circle cx="7.05" cy="4.3" r="0.85" fill="#0a9a14"/></svg>
<div class="b" style="left:171px;top:638px;width:108px;height:26px;background:#fff;border:1px solid #dcdfe3"></div>
<div class="b" style="left:278px;top:638px;width:101px;height:26px;background:#e9ecef;border:1px solid #dcdfe3"></div>
<div class="t" style="right:1178.5px;top:642.63px;font-size:13.6px;line-height:16.32px;font-weight:400;color:#212529;">A.Ostohinta</div>
<div class="t" style="left:283.5px;top:642.63px;font-size:13.6px;line-height:16.32px;font-weight:400;color:#212529;">Netto</div>
<svg class="b" style="left:358px;top:647px" width="12" height="8" viewBox="0 0 12 8"><path d="M1 1.2L6 6.2L11 1.2" fill="none" stroke="#343a40" stroke-width="1.7"/></svg>
<div class="b" style="left:171px;top:663px;width:108px;height:25px;background:#fff;border:1px solid #dcdfe3"></div>
<div class="b" style="left:278px;top:663px;width:101px;height:25px;background:#e9ecef;border:1px solid #dcdfe3"></div>
<div class="t" style="right:1178.5px;top:667.63px;font-size:13.6px;line-height:16.32px;font-weight:400;color:#212529;">Myyntihinta</div>
<div class="t" style="left:283.5px;top:667.63px;font-size:13.6px;line-height:16.32px;font-weight:400;color:#212529;">Brutto</div>
<svg class="b" style="left:358px;top:672px" width="12" height="8" viewBox="0 0 12 8"><path d="M1 1.2L6 6.2L11 1.2" fill="none" stroke="#343a40" stroke-width="1.7"/></svg>
<div class="b" style="left:171px;top:687px;width:108px;height:26px;background:#fff;border:1px solid #dcdfe3"></div>
<div class="b" style="left:278px;top:687px;width:101px;height:26px;background:#fff;border:1px solid #dcdfe3"></div>
<div class="t" style="right:1178.5px;top:691.63px;font-size:13.6px;line-height:16.32px;font-weight:400;color:#212529;">Tuotenumero</div>
<div class="t" style="left:283.5px;top:691.63px;font-size:13.6px;line-height:16.32px;font-weight:400;color:#212529;">Viivakoodi</div>
<svg class="b" style="left:358px;top:696px" width="12" height="8" viewBox="0 0 12 8"><path d="M1 1.2L6 6.2L11 1.2" fill="none" stroke="#343a40" stroke-width="1.7"/></svg>
<div class="b" style="left:171px;top:712px;width:108px;height:25px;background:#fff;border:1px solid #dcdfe3"></div>
<div class="b" style="left:278px;top:712px;width:101px;height:25px;background:#e9ecef;border:1px solid #dcdfe3"></div>
<div class="t" style="right:1178.5px;top:716.63px;font-size:13.6px;line-height:16.32px;font-weight:400;color:#212529;">Käytettävä hinta</div>
<div class="t" style="left:283.5px;top:716.63px;font-size:13.6px;line-height:16.32px;font-weight:400;color:#212529;">Ostohinta</div>
<svg class="b" style="left:358px;top:721px" width="12" height="8" viewBox="0 0 12 8"><path d="M1 1.2L6 6.2L11 1.2" fill="none" stroke="#343a40" stroke-width="1.7"/></svg>
<div class="b" style="left:384px;top:614px;width:299px;height:33px;background:#f4f4f4;border:1px solid #bdbdbd"></div>
<div class="b" style="left:391px;top:616px;width:118px;height:29px;background:#e9ecef"></div>
<svg class="b" style="left:401px;top:624px" width="9" height="10" viewBox="0 0 9 10"><rect x="0" y="0" width="2" height="10" fill="#555"/><path d="M9 0V10L2 5Z" fill="#555"/></svg>
<svg class="b" style="left:428px;top:624px" width="14" height="10" viewBox="0 0 14 10"><path d="M7 0V10L0 5Z M14 0V10L7 5Z" fill="#555"/></svg>
<svg class="b" style="left:459px;top:624px" width="14" height="10" viewBox="0 0 14 10"><path d="M0 0V10L7 5Z M7 0V10L14 5Z" fill="#555"/></svg>
<svg class="b" style="left:491px;top:624px" width="9" height="10" viewBox="0 0 9 10"><path d="M0 0V10L7 5Z" fill="#555"/><rect x="7" y="0" width="2" height="10" fill="#555"/></svg>
<div class="t" style="left:518px;top:622.13px;font-size:13.6px;line-height:16.32px;font-weight:700;color:#ea7a3c;">1</div>
<div class="t" style="left:545px;top:622.13px;font-size:13.6px;line-height:16.32px;font-weight:400;color:#212529;">Kpl:</div>
<div class="t" style="left:571px;top:622.13px;font-size:13.6px;line-height:16.32px;font-weight:700;color:#212529;">0</div>
<div class="t" style="left:585px;top:622.13px;font-size:13.6px;line-height:16.32px;font-weight:400;color:#212529;">Rivit</div>
<div class="b" style="left:612px;top:616px;width:69px;height:28px;background:#fff;border:1px solid #dcdfe3"></div>
<div class="t" style="left:619px;top:621.13px;font-size:13.6px;line-height:16.32px;font-weight:400;color:#212529;">25</div>
<svg class="b" style="left:660px;top:626px" width="12" height="8" viewBox="0 0 12 8"><path d="M1 1.2L6 6.2L11 1.2" fill="none" stroke="#343a40" stroke-width="1.7"/></svg>
<div class="b" style="left:688px;top:614px;width:146px;height:28px;background:#fff;border:1px solid #21a021"></div>
<div class="t" style="left:696px;top:620.13px;font-size:13.6px;line-height:16.32px;font-weight:400;color:#17a117;">Ostoehdotukset: 19</div>
<svg class="b" style="left:818.5px;top:625.5px" width="9" height="5" viewBox="0 0 9 5"><path d="M0 0H9L4.5 5Z" fill="#17a117"/></svg>
<div class="b" style="left:15px;top:752px;width:89px;height:30px;background:#fff;border:1px solid #dcdfe3;border-bottom:none"></div>
<div class="t" style="left:24.5px;top:759.13px;font-size:13.6px;line-height:16.32px;font-weight:400;color:#212529;">Perustiedot</div>
<div class="b" style="left:104px;top:753px;width:75px;height:28px;background:#017f08"></div>
<div class="t" style="left:112.5px;top:759.13px;font-size:13.6px;line-height:16.32px;font-weight:400;color:#fff;">Lisätiedot</div>
<div class="b" style="left:181px;top:753px;width:96px;height:28px;background:#017f08"></div>
<div class="t" style="left:190px;top:759.13px;font-size:13.6px;line-height:16.32px;font-weight:400;color:#fff;">Tiliöintitiedot</div>
<div class="b" style="left:5px;top:781px;width:1440px;height:26px;background:#f2f2f2"></div>
<div class="b" style="left:5px;top:807px;width:1440px;height:46px;background:#fff"></div>
<div class="b" style="left:335px;top:807px;width:85px;height:23px;background:#e9ecef"></div>
<div class="b" style="left:420px;top:807px;width:90px;height:23px;background:#e9ecef"></div>
<div class="b" style="left:985px;top:807px;width:95px;height:23px;background:#e9ecef"></div>
<div class="b" style="left:1080px;top:807px;width:95px;height:23px;background:#e9ecef"></div>
<div class="b" style="left:1175px;top:807px;width:85px;height:23px;background:#e9ecef"></div>
<div class="b" style="left:1260px;top:807px;width:30px;height:23px;background:#e9ecef"></div>
<div class="b" style="left:1290px;top:807px;width:70px;height:23px;background:#e9ecef"></div>
<div class="b" style="left:1360px;top:807px;width:85px;height:23px;background:#e9ecef"></div>
<div class="b" style="left:335px;top:830px;width:85px;height:23px;background:#e9ecef"></div>
<div class="b" style="left:420px;top:830px;width:90px;height:23px;background:#e9ecef"></div>
<div class="b" style="left:985px;top:830px;width:95px;height:23px;background:#e9ecef"></div>
<div class="b" style="left:1080px;top:830px;width:95px;height:23px;background:#e9ecef"></div>
<div class="b" style="left:1175px;top:830px;width:85px;height:23px;background:#e9ecef"></div>
<div class="b" style="left:1260px;top:830px;width:30px;height:23px;background:#e9ecef"></div>
<div class="b" style="left:1290px;top:830px;width:70px;height:23px;background:#e9ecef"></div>
<div class="b" style="left:1360px;top:830px;width:85px;height:23px;background:#e9ecef"></div>
<div class="b" style="left:75px;top:807px;width:130px;height:23px;background:#dff0d8"></div>
<div class="b" style="left:5px;top:781px;width:1px;height:72px;background:#dcdfe3"></div>
<div class="b" style="left:65px;top:781px;width:1px;height:72px;background:#dcdfe3"></div>
<div class="b" style="left:75px;top:781px;width:1px;height:72px;background:#dcdfe3"></div>
<div class="b" style="left:205px;top:781px;width:1px;height:72px;background:#dcdfe3"></div>
<div class="b" style="left:335px;top:781px;width:1px;height:72px;background:#dcdfe3"></div>
<div class="b" style="left:420px;top:781px;width:1px;height:72px;background:#dcdfe3"></div>
<div class="b" style="left:510px;top:781px;width:1px;height:72px;background:#dcdfe3"></div>
<div class="b" style="left:565px;top:781px;width:1px;height:72px;background:#dcdfe3"></div>
<div class="b" style="left:625px;top:781px;width:1px;height:72px;background:#dcdfe3"></div>
<div class="b" style="left:720px;top:781px;width:1px;height:72px;background:#dcdfe3"></div>
<div class="b" style="left:780px;top:781px;width:1px;height:72px;background:#dcdfe3"></div>
<div class="b" style="left:875px;top:781px;width:1px;height:72px;background:#dcdfe3"></div>
<div class="b" style="left:930px;top:781px;width:1px;height:72px;background:#dcdfe3"></div>
<div class="b" style="left:985px;top:781px;width:1px;height:72px;background:#dcdfe3"></div>
<div class="b" style="left:1080px;top:781px;width:1px;height:72px;background:#dcdfe3"></div>
<div class="b" style="left:1175px;top:781px;width:1px;height:72px;background:#dcdfe3"></div>
<div class="b" style="left:1260px;top:781px;width:1px;height:72px;background:#dcdfe3"></div>
<div class="b" style="left:1290px;top:781px;width:1px;height:72px;background:#dcdfe3"></div>
<div class="b" style="left:1360px;top:781px;width:1px;height:72px;background:#dcdfe3"></div>
<div class="b" style="left:1445px;top:781px;width:1px;height:72px;background:#dcdfe3"></div>
<div class="b" style="left:5px;top:781px;width:1441px;height:1px;background:#dcdfe3"></div>
<div class="b" style="left:5px;top:807px;width:1441px;height:1px;background:#dcdfe3"></div>
<div class="b" style="left:5px;top:830px;width:1441px;height:1px;background:#dcdfe3"></div>
<div class="b" style="left:5px;top:852px;width:1441px;height:1px;background:#dcdfe3"></div>
<div class="t" style="left:79.5px;width:125.5px;overflow:hidden;top:786.80px;font-size:13.6px;line-height:16.32px;font-weight:700;color:#111">Tuotenumero</div>
<div class="t" style="left:209.5px;width:125.5px;overflow:hidden;top:786.80px;font-size:13.6px;line-height:16.32px;font-weight:700;color:#111">Tuotenimike</div>
<div class="t" style="left:339.5px;width:80.5px;overflow:hidden;top:786.80px;font-size:13.6px;line-height:16.32px;font-weight:700;color:#111">Varasto</div>
<div class="t" style="left:424.5px;width:85.5px;overflow:hidden;top:786.80px;font-size:13.6px;line-height:16.32px;font-weight:700;color:#111">Eränumero</div>
<div class="t" style="left:514.5px;width:50.5px;overflow:hidden;top:786.80px;font-size:13.6px;line-height:16.32px;font-weight:700;color:#111">Määrä</div>
<div class="t" style="left:569.5px;width:55.5px;overflow:hidden;top:786.80px;font-size:13.6px;line-height:16.32px;font-weight:700;color:#111">Yks.</div>
<div class="t" style="left:629.5px;width:90.5px;overflow:hidden;top:786.80px;font-size:13.6px;line-height:16.32px;font-weight:700;color:#111">A.Ostohinta</div>
<div class="t" style="left:724.5px;width:55.5px;overflow:hidden;top:786.80px;font-size:13.6px;line-height:16.32px;font-weight:700;color:#111">O.kerr.</div>
<div class="t" style="left:784.5px;width:90.5px;overflow:hidden;top:786.80px;font-size:13.6px;line-height:16.32px;font-weight:700;color:#111">B.Ostohinta</div>
<div class="t" style="left:879.5px;width:50.5px;overflow:hidden;top:786.80px;font-size:13.6px;line-height:16.32px;font-weight:700;color:#111">Ale-%</div>
<div class="t" style="left:934.5px;width:50.5px;overflow:hidden;top:786.80px;font-size:13.6px;line-height:16.32px;font-weight:700;color:#111">Alv-%</div>
<div class="t" style="left:989.5px;width:90.5px;overflow:hidden;top:786.80px;font-size:13.6px;line-height:16.32px;font-weight:700;color:#111">Alv yht.</div>
<div class="t" style="left:1084.5px;width:90.5px;overflow:hidden;top:786.80px;font-size:13.6px;line-height:16.32px;font-weight:700;color:#111">Veroton</div>
<div class="t" style="left:1179.5px;width:80.5px;overflow:hidden;top:786.80px;font-size:13.6px;line-height:16.32px;font-weight:700;color:#111">Saap. määrä</div>
<div class="t" style="left:1264.5px;width:25.5px;overflow:hidden;top:786.80px;font-size:13.6px;line-height:16.32px;font-weight:700;color:#111">Jälk.</div>
<div class="t" style="left:1294.5px;width:65.5px;overflow:hidden;top:786.80px;font-size:13.6px;line-height:16.32px;font-weight:700;color:#111">Saapunut</div>
<div class="t" style="left:1364.5px;width:80.5px;overflow:hidden;top:786.80px;font-size:13.6px;line-height:16.32px;font-weight:700;color:#111">Hinnasto</div>
<svg class="b" style="left:9px;top:788px" width="13" height="13" viewBox="0 0 13 13"><circle cx="6.5" cy="6.5" r="6.3" fill="#e05858"/><rect x="3.9" y="5.8" width="5.2" height="1.5" fill="#fff"/></svg>
<svg class="b" style="left:25px;top:788px" width="11" height="13" viewBox="0 0 11 13"><path d="M5.5 12.5V1.5M1 6L5.5 1.5L10 6" fill="none" stroke="#000" stroke-width="1.8"/></svg>
<svg class="b" style="left:38px;top:788px" width="11" height="13" viewBox="0 0 11 13"><path d="M5.5 0.5V11.5M1 7L5.5 11.5L10 7" fill="none" stroke="#000" stroke-width="1.8"/></svg>
<svg class="b" style="left:10px;top:811px" width="13" height="13" viewBox="0 0 13 13"><circle cx="6.5" cy="6.5" r="6.3" fill="#e05858"/><rect x="3.9" y="5.8" width="5.2" height="1.5" fill="#fff"/></svg>
<svg class="b" style="left:26px;top:812px" width="13" height="11" viewBox="0 0 13 11"><path d="M3.2 0.5L6.5 2.6L3.2 4.7L0 2.6Z M9.8 0.5L13 2.6L9.8 4.7L6.5 2.6Z M3.2 4.7L6.5 6.8L3.2 8.9L0 6.8Z M9.8 4.7L13 6.8L9.8 8.9L6.5 6.8Z M3.2 9.4L6.5 7.6L9.8 9.4L6.5 11Z" fill="#1a9a2a"/></svg>
<svg class="b" style="left:42px;top:811.5px" width="17" height="14" viewBox="0 0 17 14"><ellipse cx="5.6" cy="9.2" rx="3.9" ry="2.5" transform="rotate(-42 5.6 9.2)" fill="none" stroke="#1a9a2a" stroke-width="1.6"/><ellipse cx="11.2" cy="5" rx="3.9" ry="2.5" transform="rotate(-42 11.2 5)" fill="none" stroke="#1a9a2a" stroke-width="1.6"/><path d="M1 0.8L16.3 13.3" stroke="#fff" stroke-width="2.6"/><path d="M1 0.8L16.3 13.3" stroke="#1a9a2a" stroke-width="1.2"/></svg>
<div class="t" style="left:67.5px;top:810.73px;font-size:13.6px;line-height:16.32px;font-weight:400;color:#212529;">1</div>
<div class="t" style="left:77.5px;top:810.73px;font-size:13.6px;line-height:16.32px;font-weight:400;color:#212529;">1.2029</div>
<div class="t" style="left:207.5px;top:810.73px;font-size:13.6px;line-height:16.32px;font-weight:400;color:#212529;">Neliö Aluslevy M8</div>
<div class="t" style="left:336.5px;width:83px;overflow:hidden;top:810.70px;font-size:13.6px;line-height:16.32px;color:#212529">Asiakastoimitus</div>
<div class="t" style="right:888.2px;top:810.73px;font-size:13.6px;line-height:16.32px;font-weight:400;color:#212529;">50.000</div>
<div class="t" style="right:733.5px;top:810.73px;font-size:13.6px;line-height:16.32px;font-weight:400;color:#212529;">0.020</div>
<div class="t" style="right:578.5px;top:810.73px;font-size:13.6px;line-height:16.32px;font-weight:400;color:#212529;">0.020</div>
<div class="t" style="right:523.7px;top:810.73px;font-size:13.6px;line-height:16.32px;font-weight:400;color:#212529;">30.00</div>
<div class="t" style="right:468.29999999999995px;top:810.73px;font-size:13.6px;line-height:16.32px;font-weight:400;color:#212529;">25.5</div>
<div class="t" style="right:373.29999999999995px;top:810.73px;font-size:13.6px;line-height:16.32px;font-weight:400;color:#212529;">0.18</div>
<div class="t" style="right:278.4000000000001px;top:810.73px;font-size:13.6px;line-height:16.32px;font-weight:400;color:#212529;">0.70</div>
<div class="t" style="right:193.4000000000001px;top:810.73px;font-size:13.6px;line-height:16.32px;font-weight:400;color:#212529;">0.000</div>
<div class="t" style="left:567.5px;top:810.73px;font-size:13.6px;line-height:16.32px;font-weight:400;color:#212529;">kpl</div>
<div class="t" style="left:975.5px;width:600px;text-align:center;top:810.73px;font-size:13.6px;line-height:16.32px;font-weight:400;color:#212529;">N</div>
<div class="t" style="left:1362.5px;top:810.73px;font-size:13.6px;line-height:16.32px;font-weight:400;color:#212529;">Ostohinnasto</div>
<svg class="b" style="left:10px;top:834px" width="13" height="13" viewBox="0 0 13 13"><circle cx="6.5" cy="6.5" r="6.3" fill="#5cb85c"/><rect x="3.9" y="5.8" width="5.2" height="1.5" fill="#fff"/><rect x="5.75" y="3.9" width="1.5" height="5.2" fill="#fff"/></svg>
<div class="t" style="left:67.5px;top:833.93px;font-size:13.6px;line-height:16.32px;font-weight:400;color:#212529;">2</div>
<div class="t" style="right:888.2px;top:833.93px;font-size:13.6px;line-height:16.32px;font-weight:400;color:#212529;">1.000</div>
<div class="t" style="right:733.5px;top:833.93px;font-size:13.6px;line-height:16.32px;font-weight:400;color:#212529;">0.000</div>
<div class="t" style="right:578.5px;top:833.93px;font-size:13.6px;line-height:16.32px;font-weight:400;color:#212529;">0.000</div>
<div class="t" style="right:523.7px;top:833.93px;font-size:13.6px;line-height:16.32px;font-weight:400;color:#212529;">0.00</div>
<div class="t" style="right:468.29999999999995px;top:833.93px;font-size:13.6px;line-height:16.32px;font-weight:400;color:#212529;">0</div>
<div class="t" style="right:373.29999999999995px;top:833.93px;font-size:13.6px;line-height:16.32px;font-weight:400;color:#212529;">0.00</div>
<div class="t" style="right:278.4000000000001px;top:833.93px;font-size:13.6px;line-height:16.32px;font-weight:400;color:#212529;">0.00</div>
<div class="t" style="right:193.4000000000001px;top:833.93px;font-size:13.6px;line-height:16.32px;font-weight:400;color:#212529;">0</div>
<div class="t" style="left:567.5px;top:833.93px;font-size:13.6px;line-height:16.32px;font-weight:400;color:#212529;">kpl</div>
<div class="t" style="left:723px;top:833.93px;font-size:13.6px;line-height:16.32px;font-weight:400;color:#212529;">1.2</div>
<div class="t" style="left:975.5px;width:600px;text-align:center;top:833.93px;font-size:13.6px;line-height:16.32px;font-weight:400;color:#212529;">N</div>
</body></html>
